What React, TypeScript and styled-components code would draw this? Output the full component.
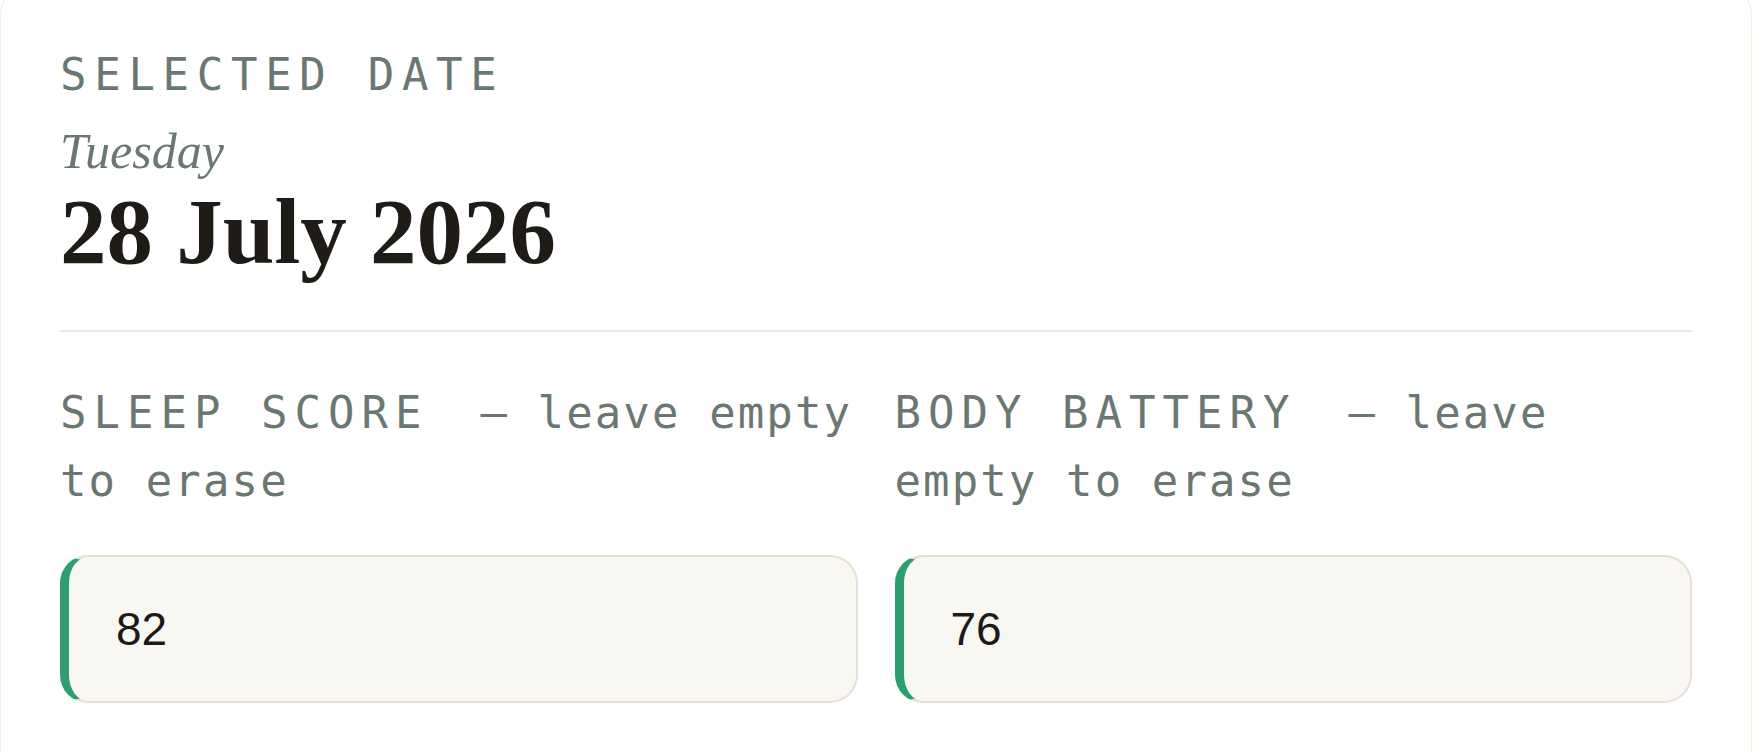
import * as React from "react";
import styled, { createGlobalStyle } from "styled-components";

const GlobalStyle = createGlobalStyle`
  html, body {
    margin: 0;
    padding: 0;
    background: #ffffff;
  }
  * {
    box-sizing: border-box;
  }
`;

const Card = styled.section`
  margin-top: -14px;
  height: 767px;
  padding: 62px 59px 0 59px;
  background: #ffffff;
  border: 1px solid #efede6;
  border-bottom: none;
  border-radius: 28px 28px 0 0;
`;

const Eyebrow = styled.div`
  font-family: "DejaVu Sans Mono", "Liberation Mono", monospace;
  font-size: 44px;
  line-height: 52px;
  letter-spacing: 7.7px;
  color: #6a7871;
  text-transform: uppercase;
`;

const Weekday = styled.div`
  margin-top: 22px;
  font-family: "Liberation Serif", "DejaVu Serif", serif;
  font-style: italic;
  font-size: 50px;
  line-height: 57px;
  color: #6a7871;
`;

const DateTitle = styled.h1`
  margin: 2px 0 0 0;
  font-family: "Liberation Serif", "DejaVu Serif", serif;
  font-weight: 700;
  font-size: 93px;
  line-height: 100px;
  color: #1f1c17;
`;

const Divider = styled.hr`
  margin: 48px 0 0 0;
  border: none;
  height: 2px;
  background: #ece7db;
`;

const Fields = styled.div`
  margin-top: 47px;
  display: grid;
  grid-template-columns: 1fr 1fr;
  column-gap: 37px;
`;

const Field = styled.div`
  display: flex;
  flex-direction: column;
  gap: 40px;
`;

const Label = styled.label`
  margin-right: -10px;
  font-family: "DejaVu Sans Mono", "Liberation Mono", monospace;
  font-size: 44px;
  line-height: 68px;
  color: #6a7871;
`;

const LabelName = styled.span`
  margin-right: 52px;
  letter-spacing: 7px;
  text-transform: uppercase;
`;

const Hint = styled.span`
  letter-spacing: 2.1px;
`;

const Input = styled.input<{ $filled?: boolean }>`
  width: 100%;
  height: 148px;
  padding: 0 24px 0 47px;
  border: 2px solid #e6e0d2;
  border-left: 9px solid ${(p) => (p.$filled ? "#2e9d70" : "#e6e0d2")};
  border-radius: 28px;
  background: #f9f7f2;
  font-family: "Liberation Sans", Arial, sans-serif;
  font-size: 46px;
  color: #1d1a16;
  outline: none;
`;

type Metric = {
  id: string;
  name: string;
  value: string;
};

const metrics: Metric[] = [
  { id: "sleep", name: "Sleep score", value: "82" },
  { id: "battery", name: "Body battery", value: "76" },
];

export default function App() {
  return (
    <>
      <GlobalStyle />
      <Card>
        <Eyebrow>Selected date</Eyebrow>
        <Weekday>Tuesday</Weekday>
        <DateTitle>28 July 2026</DateTitle>
        <Divider />
        <Fields>
          {metrics.map((m) => (
            <Field key={m.id}>
              <Label htmlFor={m.id}>
                <LabelName>{m.name}</LabelName>
                <Hint>— leave empty to erase</Hint>
              </Label>
              <Input
                id={m.id}
                inputMode="numeric"
                defaultValue={m.value}
                $filled={m.value !== ""}
              />
            </Field>
          ))}
        </Fields>
      </Card>
    </>
  );
}
